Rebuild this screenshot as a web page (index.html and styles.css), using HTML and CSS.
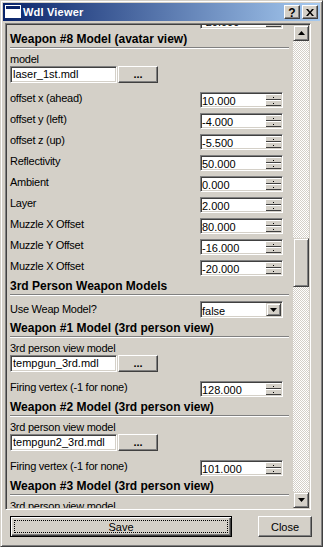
FILE: index.html
```html
<!DOCTYPE html>
<html lang="en">
<head>
<meta charset="UTF-8" />
<title>Wdl Viewer</title>
<link rel="stylesheet" href="styles.css">
</head>
<body>
  <div class="window">
    <div class="titlebar">
      <svg class="app-icon" width="16" height="14" viewBox="0 0 16 14">
        <rect x="0.5" y="0.5" width="15" height="12" fill="#fff" stroke="#fff"/>
        <rect x="1" y="1" width="14" height="3" fill="#0a246a"/>
      </svg>
      <span class="title">Wdl Viewer</span>
      <div class="caption-buttons">
        <button class="cap-btn help">?</button>
        <button class="cap-btn" aria-label="Close">
          <svg width="8" height="7" viewBox="0 0 8 7">
            <path d="M0 0h2l2 2.5L6 0h2L5 3.5 8 7H6L4 4.5 2 7H0l3-3.5z" fill="#000"/>
          </svg>
        </button>
      </div>
    </div>

    <div class="client">
      <div class="panel">
        <div class="scroll-view">
          <!-- list is scrolled: first row sits partly above the view -->
          <div class="props">
            <div class="spin-row">
              <span class="label">Muzzle X Offset</span>
              <div class="spin"><span class="spin-value">-20.000</span><div class="spin-btns"><span></span><span></span></div></div>
            </div>

            <div class="section-title">Weapon #8 Model (avatar view)</div>
            <div class="field-label">model</div>
            <div class="file-row">
              <div class="text-field">laser_1st.mdl</div>
              <button class="btn browse">...</button>
            </div>
            <div class="spin-row">
              <span class="label">offset x (ahead)</span>
              <div class="spin"><span class="spin-value">10.000</span><div class="spin-btns"><span></span><span></span></div></div>
            </div>
            <div class="spin-row">
              <span class="label">offset y (left)</span>
              <div class="spin"><span class="spin-value">-4.000</span><div class="spin-btns"><span></span><span></span></div></div>
            </div>
            <div class="spin-row">
              <span class="label">offset z (up)</span>
              <div class="spin"><span class="spin-value">-5.500</span><div class="spin-btns"><span></span><span></span></div></div>
            </div>
            <div class="spin-row">
              <span class="label">Reflectivity</span>
              <div class="spin"><span class="spin-value">50.000</span><div class="spin-btns"><span></span><span></span></div></div>
            </div>
            <div class="spin-row">
              <span class="label">Ambient</span>
              <div class="spin"><span class="spin-value">0.000</span><div class="spin-btns"><span></span><span></span></div></div>
            </div>
            <div class="spin-row">
              <span class="label">Layer</span>
              <div class="spin"><span class="spin-value">2.000</span><div class="spin-btns"><span></span><span></span></div></div>
            </div>
            <div class="spin-row">
              <span class="label">Muzzle X Offset</span>
              <div class="spin"><span class="spin-value">80.000</span><div class="spin-btns"><span></span><span></span></div></div>
            </div>
            <div class="spin-row">
              <span class="label">Muzzle Y Offset</span>
              <div class="spin"><span class="spin-value">-16.000</span><div class="spin-btns"><span></span><span></span></div></div>
            </div>
            <div class="spin-row">
              <span class="label">Muzzle X Offset</span>
              <div class="spin"><span class="spin-value">-20.000</span><div class="spin-btns"><span></span><span></span></div></div>
            </div>

            <div class="section-title">3rd Person Weapon Models</div>
            <div class="combo-row">
              <span class="label">Use Weap Model?</span>
              <div class="combo">
                <span class="combo-value">false</span>
                <span class="combo-btn">
                  <svg width="7" height="4" viewBox="0 0 7 4"><path d="M0 0h7L3.5 4z" fill="#000"/></svg>
                </span>
              </div>
            </div>

            <div class="section-title">Weapon #1 Model (3rd person view)</div>
            <div class="field-label">3rd person view model</div>
            <div class="file-row">
              <div class="text-field">tempgun_3rd.mdl</div>
              <button class="btn browse">...</button>
            </div>
            <div class="spin-row">
              <span class="label">Firing vertex (-1 for none)</span>
              <div class="spin"><span class="spin-value">128.000</span><div class="spin-btns"><span></span><span></span></div></div>
            </div>

            <div class="section-title">Weapon #2 Model (3rd person view)</div>
            <div class="field-label">3rd person view model</div>
            <div class="file-row">
              <div class="text-field">tempgun2_3rd.mdl</div>
              <button class="btn browse">...</button>
            </div>
            <div class="spin-row">
              <span class="label">Firing vertex (-1 for none)</span>
              <div class="spin"><span class="spin-value">101.000</span><div class="spin-btns"><span></span><span></span></div></div>
            </div>

            <div class="section-title">Weapon #3 Model (3rd person view)</div>
            <div class="field-label">3rd person view model</div>
            <div class="file-row">
              <div class="text-field">tempgun3_3rd.mdl</div>
              <button class="btn browse">...</button>
            </div>
          </div>
        </div>

        <div class="scrollbar">
          <div class="sb-btn">
            <svg width="7" height="4" viewBox="0 0 7 4"><path d="M3.5 0L7 4H0z" fill="#000"/></svg>
          </div>
          <div class="sb-track"><div class="sb-thumb"></div></div>
          <div class="sb-btn">
            <svg width="7" height="4" viewBox="0 0 7 4"><path d="M0 0h7L3.5 4z" fill="#000"/></svg>
          </div>
        </div>
      </div>

      <div class="actions">
        <button class="btn default save">Save</button>
        <button class="btn close">Close</button>
      </div>
    </div>
  </div>
</body>
</html>
```

FILE: styles.css
```css
* {
  box-sizing: border-box;
}
body {
  margin: 0;
  background-color: #d4d0c8;
  font-family: "Liberation Sans", Arial, sans-serif;
  font-size: 11px;
  color: #000;
}
button {
  font-family: inherit;
  font-size: 11px;
  color: #000;
  padding: 0;
}

/* janela estilo Win2000 */
.window {
  width: 323px;
  height: 547px;
  background-color: #d4d0c8;
  border: 1px solid;
  border-color: #d4d0c8 #404040 #404040 #d4d0c8;
  box-shadow: inset 1px 1px #fff, inset -1px -1px #808080;
  padding: 2px;
  display: flex;
  flex-direction: column;
}
.titlebar {
  height: 18px;
  flex-shrink: 0;
  background: linear-gradient(to right, #0a246a, #a6caf0);
  display: flex;
  align-items: center;
  padding-left: 2px;
}
.app-icon {
  margin-right: 2px;
  flex-shrink: 0;
}
.title {
  flex: 1;
  height: 18px;
  color: #fff;
  font-weight: bold;
  font-size: 11px;
  line-height: 18px;
  letter-spacing: 0.2px;
  white-space: nowrap;
}
.caption-buttons {
  display: flex;
  gap: 2px;
  margin-right: 2px;
}
.cap-btn {
  width: 16px;
  height: 14px;
  background-color: #d4d0c8;
  border: 1px solid;
  border-color: #fff #404040 #404040 #fff;
  box-shadow: inset -1px -1px #808080;
  display: flex;
  align-items: center;
  justify-content: center;
}
.cap-btn.help {
  font-weight: bold;
  font-size: 12px;
  line-height: 12px;
  padding-top: 1px;
}

.client {
  flex: 1;
  padding: 2px 0 0 2px;
}
.panel {
  width: 306px;
  height: 487px;
  display: flex;
  border: 1px solid;
  border-color: #808080 #fff #fff #808080;
  box-shadow: inset 1px 1px #404040, inset -1px -1px #d4d0c8;
  padding: 1px;
}
.scroll-view {
  flex: 1;
  overflow: hidden;
}
.props {
  margin-top: -14px;
  padding: 0 4px 0 3px;
}

.section-title {
  font-weight: bold;
  font-size: 12px;
  letter-spacing: 0;
  line-height: 15px;
  white-space: nowrap;
  border-bottom: 1px solid #808080;
  box-shadow: 0 1px 0 #fff;
  margin-bottom: 1px;
}
.field-label,
.label {
  letter-spacing: -0.25px;
  white-space: nowrap;
}
.field-label {
  line-height: 14px;
  margin-top: 4px;
}
.label {
  line-height: 13px;
}

.file-row {
  display: flex;
  height: 17px;
  margin-bottom: 7px;
}
.text-field {
  width: 107px;
  height: 17px;
  background-color: #fff;
  border: 1px solid;
  border-color: #808080 #fff #fff #808080;
  box-shadow: inset 1px 1px #404040, inset -1px -1px #d4d0c8;
  padding: 1px 0 0 2px;
  line-height: 13px;
  white-space: nowrap;
  overflow: hidden;
}
.btn {
  background-color: #d4d0c8;
  border: 1px solid;
  border-color: #fff #404040 #404040 #fff;
  box-shadow: inset -1px -1px #808080;
}
.btn.browse {
  width: 40px;
  height: 17px;
  margin-left: 1px;
  font-weight: bold;
  line-height: 13px;
}

.spin-row {
  height: 21px;
  display: flex;
  align-items: flex-start;
  padding-top: 2px;
}
.spin,
.combo {
  width: 83px;
  margin-left: auto;
  margin-right: 6px;
  display: flex;
  background-color: #fff;
  border: 1px solid;
  border-color: #808080 #fff #fff #808080;
  box-shadow: inset 1px 1px #404040, inset -1px -1px #d4d0c8;
}
.spin {
  height: 16px;
}
.spin-value,
.combo-value {
  flex: 1;
  padding: 1px 0 0 1px;
  line-height: 14px;
  white-space: nowrap;
}
.spin-btns {
  width: 15px;
  margin: 1px 1px 1px 0;
  display: flex;
  flex-direction: column;
  background-color: #d4d0c8;
}
.spin-btns span {
  flex: 1;
  position: relative;
  border-top: 1px solid #fff;
  border-bottom: 1px solid #404040;
}
.spin-btns span::after {
  content: "";
  position: absolute;
  left: 7px;
  top: 2px;
  width: 1px;
  height: 1px;
  background-color: #000;
}

.combo-row {
  height: 25px;
  display: flex;
  align-items: flex-start;
  padding-top: 5px;
}
.combo-row .label {
  line-height: 17px;
}
.combo {
  height: 17px;
}
.combo-value {
  padding-top: 2px;
}
.combo-btn {
  width: 15px;
  margin: 1px 1px 1px 0;
  background-color: #d4d0c8;
  border: 1px solid;
  border-color: #d4d0c8 #404040 #404040 #d4d0c8;
  box-shadow: inset 1px 1px #fff, inset -1px -1px #808080;
  display: flex;
  align-items: center;
  justify-content: center;
}

/* barra de rolagem */
.scrollbar {
  width: 16px;
  display: flex;
  flex-direction: column;
}
.sb-btn {
  height: 16px;
  flex-shrink: 0;
  background-color: #d4d0c8;
  border: 1px solid;
  border-color: #d4d0c8 #404040 #404040 #d4d0c8;
  box-shadow: inset 1px 1px #fff, inset -1px -1px #808080;
  display: flex;
  align-items: center;
  justify-content: center;
}
.sb-track {
  flex: 1;
  background: repeating-conic-gradient(#fff 0% 25%, #d4d0c8 0% 50%) 0 0 / 2px 2px;
  padding-top: 197px;
}
.sb-thumb {
  height: 49px;
  background-color: #d4d0c8;
  border: 1px solid;
  border-color: #d4d0c8 #404040 #404040 #d4d0c8;
  box-shadow: inset 1px 1px #fff, inset -1px -1px #808080;
}

.actions {
  display: flex;
  margin-top: 6px;
  padding-left: 5px;
}
.btn.save {
  width: 222px;
  height: 21px;
  position: relative;
}
.btn.default {
  border: 1px solid #000;
  box-shadow: inset 1px 1px #fff, inset -1px -1px #404040, inset -2px -2px #808080;
}
.btn.default::after {
  content: "";
  position: absolute;
  top: 3px;
  left: 3px;
  right: 3px;
  bottom: 3px;
  border: 1px dotted #000;
}
.btn.close {
  width: 54px;
  height: 21px;
  margin-left: 26px;
}
```
